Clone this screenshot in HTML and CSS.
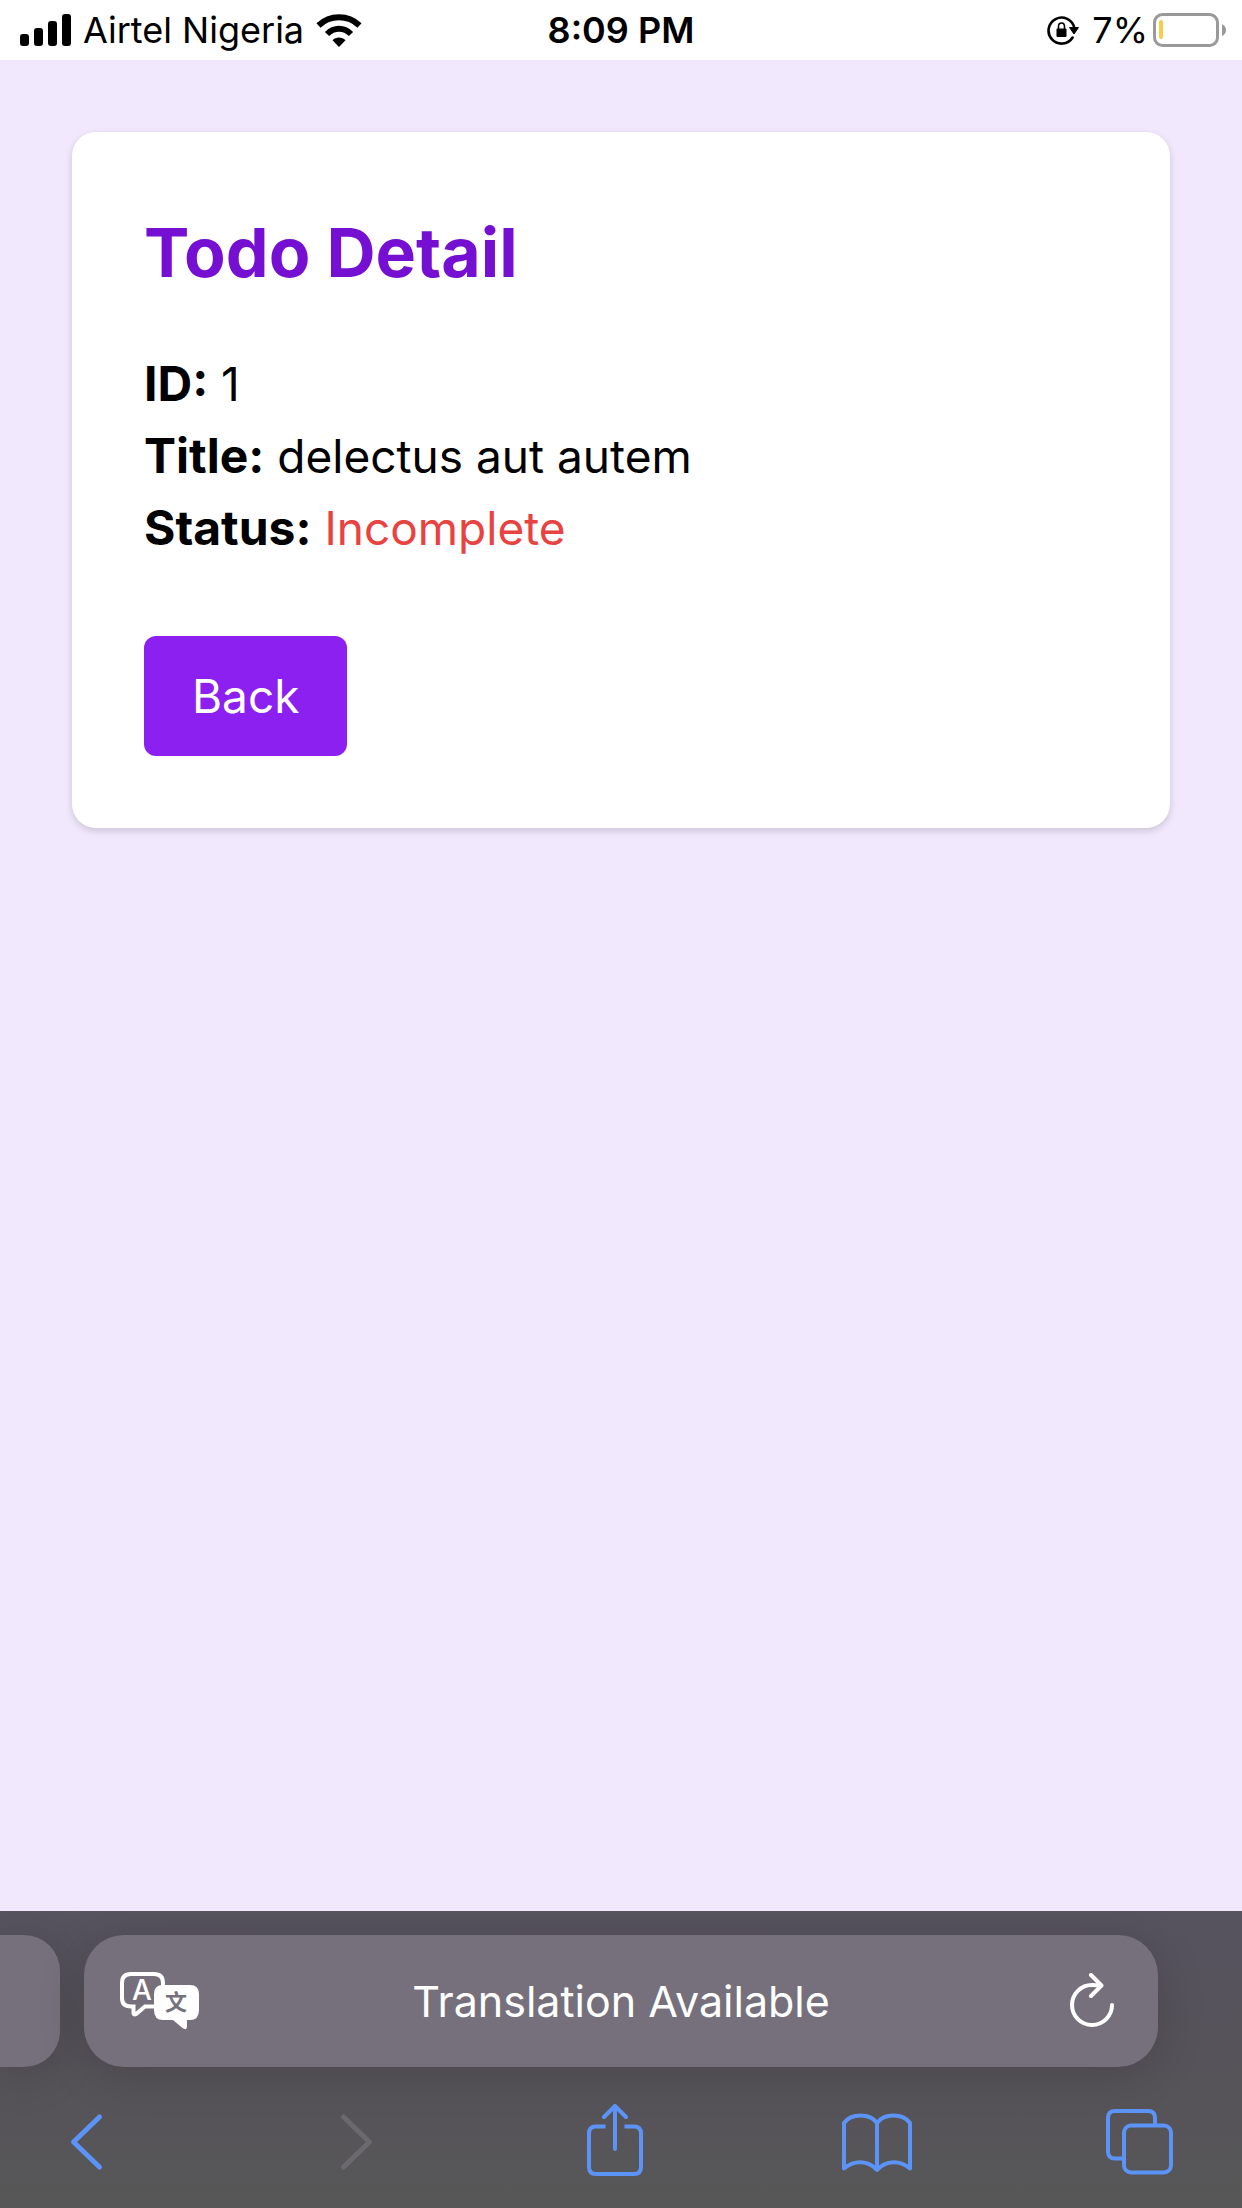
FILE: index.html
```html
<!DOCTYPE html>
<html lang="en">
<head>
<meta charset="utf-8">
<meta name="viewport" content="width=device-width, initial-scale=1">
<title>Todo Detail</title>
<link rel="stylesheet" href="styles.css">
</head>
<body>
<header class="status-bar">
  <div class="status-left">
    <svg class="signal" width="51" height="32" viewBox="0 0 51 32" aria-hidden="true">
      <rect x="0" y="20" width="9" height="12" rx="3"/>
      <rect x="14" y="14" width="9" height="18" rx="3"/>
      <rect x="28" y="7" width="9" height="25" rx="3"/>
      <rect x="42" y="0" width="9" height="32" rx="3"/>
    </svg>
    <span class="carrier">Airtel Nigeria</span>
    <svg class="wifi" width="46" height="33" viewBox="0 0 46 33" aria-hidden="true">
      <g fill="none" stroke="#000" stroke-width="6">
        <path d="M2.500 11.500 C14 0.500 32 0.500 43.500 11.500"/>
        <path d="M11 20 C18 13 28 13 35 20"/>
      </g>
      <path d="M16.500 26.300 C20 22.700 26 22.700 29.500 26.300 L23 33 Z"/>
    </svg>
  </div>
  <span class="clock">8:09 PM</span>
  <div class="status-right">
    <svg class="rotation-lock" width="32" height="30" viewBox="0 0 32 30" aria-hidden="true">
      <path d="M25.600 22.500 A13 13 0 1 1 27.300 13" fill="none" stroke="#000" stroke-width="2.600" stroke-linecap="round"/>
      <path d="M22.500 12.500 H31.500 L27 19 Z" stroke="#000" stroke-linejoin="round"/>
      <rect x="9.500" y="13.500" width="10" height="8.500" rx="1"/>
      <path d="M11.500 14 V11.500 A3 3.500 0 0 1 17.500 11.500 V14" fill="none" stroke="#000" stroke-width="1.600"/>
    </svg>
    <span class="charge">7%</span>
    <svg class="battery" width="73" height="34" viewBox="0 0 73 34" aria-hidden="true">
      <rect x="1.500" y="1.500" width="63" height="31" rx="8" fill="none" stroke="#999" stroke-width="3"/>
      <rect x="6" y="7" width="4" height="19" rx="2" fill="#f7ce46"/>
      <path d="M69 11 Q73 13 73 17 Q73 21 69 23 Z" fill="#999"/>
    </svg>
  </div>
</header>

<main class="page">
  <section class="card">
    <h1 class="card-title">Todo Detail</h1>
    <p class="field"><strong>ID:</strong> 1</p>
    <p class="field"><strong>Title:</strong> delectus aut autem</p>
    <p class="field"><strong>Status:</strong> <span class="incomplete">Incomplete</span></p>
    <button class="back-button" type="button">Back</button>
  </section>
</main>

<footer class="browser-chrome">
  <div class="tab-strip">
    <div class="previous-tab"></div>
    <div class="address-bar">
      <button class="icon-button translate" type="button" aria-label="Translate">
        <svg width="80" height="58" viewBox="0 0 80 58">
          <path d="M34 34.500 H25 L16 42 Q13.500 43.500 13.500 40.500 V34.500 H11 Q2 34.500 2 26 V11 Q2 2 11 2 H34 Q43 2 43 11 V14" fill="none" stroke="#fff" stroke-width="4"/>
          <path d="M43 13 H70 Q79 13 79 22 V38 Q79 48 70 48 H67 V54 Q67 59 62.500 56 L53 48 H43 Q34 48 34 38 V22 Q34 13 43 13 Z" fill="#fff"/>
          <text class="glyph-latin" x="22" y="28" text-anchor="middle">A</text>
          <text class="glyph-han" x="56" y="38" text-anchor="middle">文</text>
        </svg>
      </button>
      <span class="address-label">Translation Available</span>
      <button class="icon-button reload" type="button" aria-label="Reload">
        <svg width="52" height="56" viewBox="0 0 52 56">
          <g fill="none" stroke="#fff" stroke-width="4" stroke-linecap="round" stroke-linejoin="round">
            <path d="M42 32 A20 20 0 1 1 22 12 Q27 12 31 12.500"/>
            <path d="M21 2 L31.500 12.500 L21 23"/>
          </g>
        </svg>
      </button>
    </div>
  </div>
  <nav class="toolbar" aria-label="Browser">
    <button class="icon-button" type="button" aria-label="Go back">
      <svg class="tool" width="72" height="72" viewBox="0 0 72 72"><path d="M48.500 13 L22.500 38 L48.500 63" stroke-width="5"/></svg>
    </button>
    <button class="icon-button" type="button" aria-label="Go forward" disabled>
      <svg class="tool" width="72" height="72" viewBox="0 0 72 72"><path d="M29.500 13 L55.500 38 L29.500 63" stroke-width="5"/></svg>
    </button>
    <button class="icon-button" type="button" aria-label="Share">
      <svg class="tool" width="72" height="72" viewBox="0 0 72 72">
        <path d="M28.500 22.500 H19 Q12 22.500 12 29.500 V63 Q12 70 19 70 H57 Q64 70 64 63 V29.500 Q64 22.500 57 22.500 H47.500" stroke-linecap="butt"/>
        <path d="M38 45 V2.500 M27 13 L38 2 L49 13"/>
      </svg>
    </button>
    <button class="icon-button" type="button" aria-label="Bookmarks">
      <svg class="tool" width="72" height="72" viewBox="0 0 72 72">
        <path d="M37 19 C30 9 11 9 4 19 V64.500 C14 56 28 56 37 66 C46 56 60 56 70 64.500 V19 C63 9 44 9 37 19 V65"/>
      </svg>
    </button>
    <button class="icon-button" type="button" aria-label="Tabs">
      <svg class="tool" width="72" height="72" viewBox="0 0 72 72">
        <rect x="21" y="21.500" width="47" height="47" rx="7"/>
        <path d="M20 54.500 H12 Q5 54.500 5 47.500 V14 Q5 7 12 7 H45 Q52 7 52 14 V20" stroke-linecap="butt"/>
      </svg>
    </button>
  </nav>
</footer>
</body>
</html>
```

FILE: styles.css
```css
* {
  box-sizing: border-box;
}

body {
  display: flex;
  flex-direction: column;
  min-height: 100vh;
  margin: 0;
  background: #f1e8fd;
  color: #000;
  font-family: Inter, "Liberation Sans", sans-serif;
  font-size: 46px;
  line-height: 72px;
}

svg {
  display: block;
}

/* Status bar */
.status-bar {
  display: grid;
  grid-template-columns: 1fr auto 1fr;
  align-items: center;
  height: 60px;
  padding: 0 16px;
  background: #fff;
  font-size: 36px;
  line-height: 60px;
}

.status-left,
.status-right {
  display: flex;
  align-items: center;
}

.status-left {
  gap: 12px;
  padding-left: 4px;
}

.status-right {
  justify-content: flex-end;
  gap: 5px;
}

.rotation-lock {
  margin-right: 8px;
}

.clock {
  font-weight: 600;
}

/* Page */
.page {
  flex: 1;
  padding: 72px;
}

.card {
  padding: 72px;
  border-radius: 24px;
  background: #fff;
  box-shadow: 0 3px 9px rgba(0, 0, 0, 0.1), 0 3px 6px rgba(0, 0, 0, 0.06);
}

.card-title {
  margin: 0 0 48px;
  color: #7510d2;
  font-size: 68px;
  font-weight: 700;
  line-height: 96px;
}

.field {
  margin: 0;
}

.field strong {
  font-size: 48px;
  font-weight: 700;
}

.incomplete {
  color: #e84340;
}

.back-button {
  display: block;
  margin-top: 72px;
  padding: 24px 48px;
  border: 0;
  border-radius: 12px;
  background: #8b20f0;
  color: #fff;
  font: inherit;
}

/* Browser controls */
.browser-chrome {
  padding: 24px 0 32px;
  overflow: hidden;
  background: linear-gradient(#57535f, #565359 60%, #575757);
}

.tab-strip {
  display: flex;
  gap: 24px;
  padding-right: 84px;
}

.previous-tab,
.address-bar {
  height: 132px;
  background: #75707b;
  box-shadow: 0 6px 48px rgba(0, 0, 0, 0.16);
}

.previous-tab {
  flex: 0 0 60px;
  border-radius: 0 36px 36px 0;
}

.address-bar {
  display: grid;
  flex: 1;
  grid-template-columns: 1fr auto 1fr;
  align-items: center;
  padding: 0 36px;
  border-radius: 40px;
  color: #fff;
}

.address-label {
  font-size: 43px;
}

.icon-button {
  padding: 0;
  border: 0;
  background: none;
  color: #5b93f7;
}

.icon-button:disabled {
  color: #6b696d;
}

.translate {
  justify-self: start;
}

.reload {
  justify-self: end;
}

.glyph-latin {
  fill: #fff;
  font: 500 28px Inter, sans-serif;
}

.glyph-han {
  fill: #75707b;
  font: 700 22px "Noto Sans CJK SC", sans-serif;
}

.toolbar {
  display: flex;
  justify-content: space-between;
  padding: 37px 67px 0 51px;
}

.tool {
  fill: none;
  stroke: currentColor;
  stroke-width: 4;
  stroke-linecap: round;
  stroke-linejoin: round;
}
```
